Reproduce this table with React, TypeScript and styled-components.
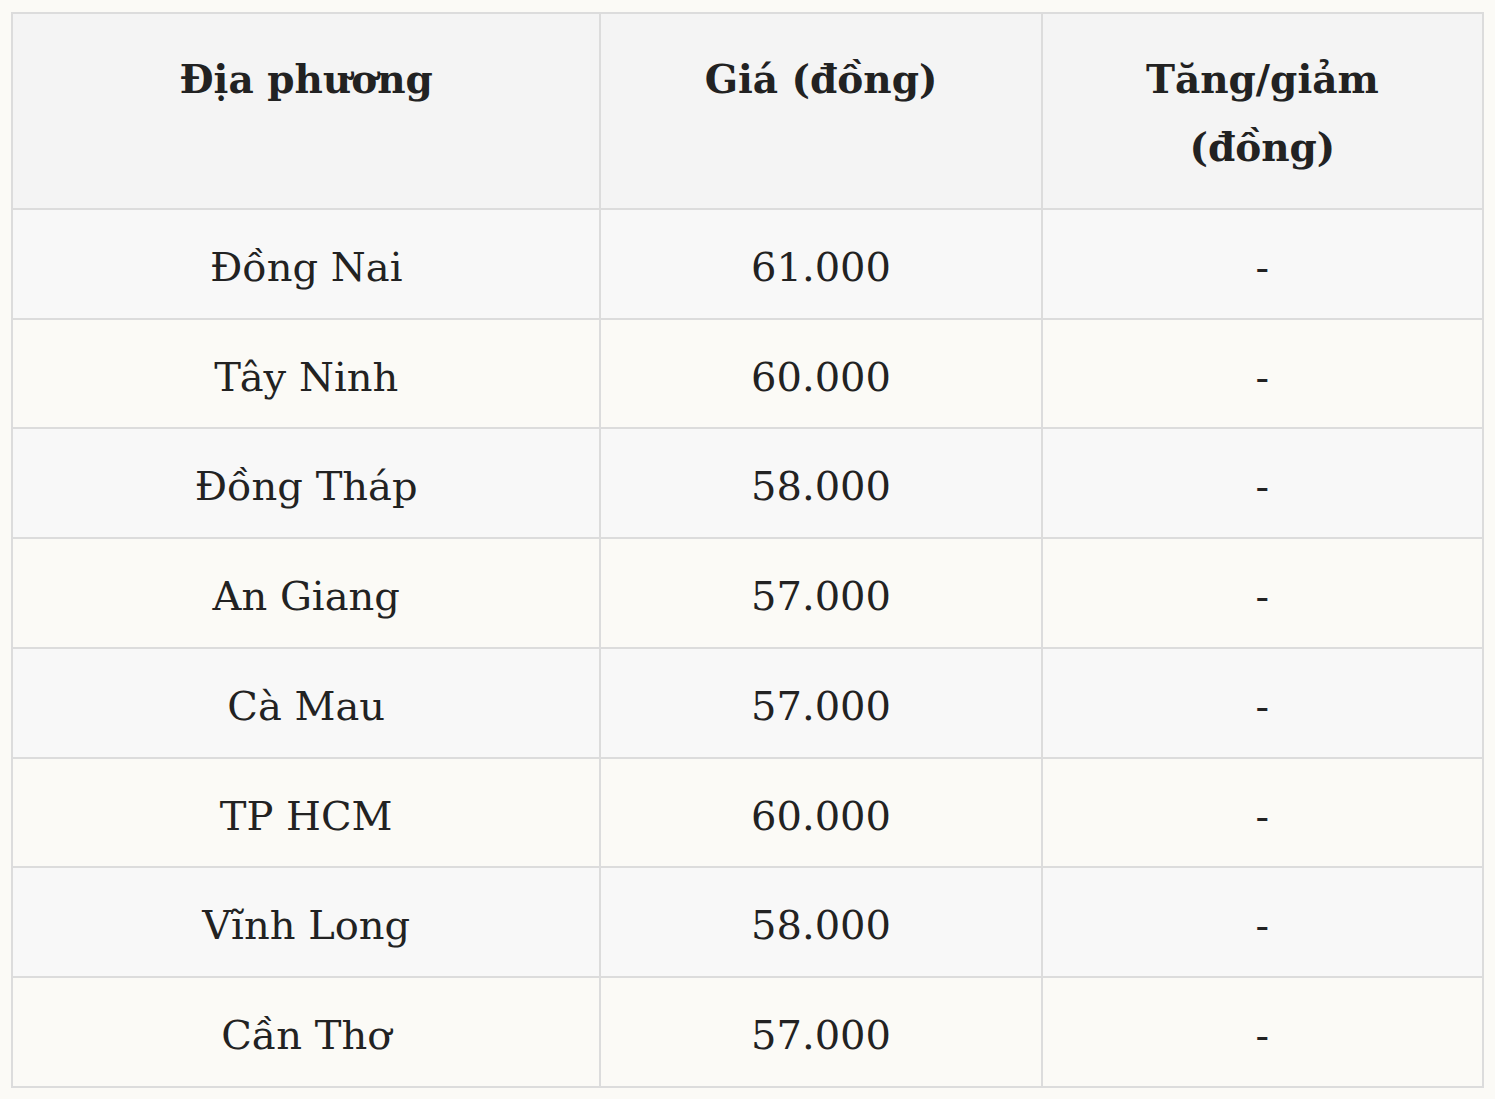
import React from 'react';
import styled, { createGlobalStyle } from 'styled-components';

const GlobalStyle = createGlobalStyle`
  html, body {
    margin: 0;
    padding: 0;
    background: #fbfaf6;
  }
  body {
    padding: 12px 11px;
    font-family: "DejaVu Serif", "Liberation Serif", serif;
    color: #222222;
  }
`;

const rows = [
  { place: 'Đồng Nai', price: '61.000', change: '-' },
  { place: 'Tây Ninh', price: '60.000', change: '-' },
  { place: 'Đồng Tháp', price: '58.000', change: '-' },
  { place: 'An Giang', price: '57.000', change: '-' },
  { place: 'Cà Mau', price: '57.000', change: '-' },
  { place: 'TP HCM', price: '60.000', change: '-' },
  { place: 'Vĩnh Long', price: '58.000', change: '-' },
  { place: 'Cần Thơ', price: '57.000', change: '-' },
];

const App = () => {
  return (
    <>
      <GlobalStyle />
      <PriceTable>
        <colgroup>
          <col style={{ width: '40%' }} />
          <col style={{ width: '30%' }} />
          <col style={{ width: '30%' }} />
        </colgroup>
        <thead>
          <tr>
            <HeadCell>Địa phương</HeadCell>
            <HeadCell>Giá (đồng)</HeadCell>
            <HeadCell>Tăng/giảm (đồng)</HeadCell>
          </tr>
        </thead>
        <tbody>
          {rows.map((row, i) => (
            <BodyRow key={row.place} $odd={i % 2 === 0}>
              <BodyCell>{row.place}</BodyCell>
              <BodyCell>{row.price}</BodyCell>
              <BodyCell>{row.change}</BodyCell>
            </BodyRow>
          ))}
        </tbody>
      </PriceTable>
    </>
  );
};

export default App;

const PriceTable = styled.table`
  width: 1473px;
  border-collapse: collapse;
  table-layout: fixed;
  border: 2px solid #dcdcdc;
`;

const HeadCell = styled.th`
  background-color: #f4f4f4;
  border: 2px solid #dcdcdc;
  padding: 31px 60px 27px;
  vertical-align: top;
  text-align: center;
  font-size: 39px;
  font-weight: 700;
  line-height: 68px;
  color: #222222;
`;

const BodyRow = styled.tr<{ $odd: boolean }>`
  background-color: ${({ $odd }) => ($odd ? '#f8f8f8' : '#fbfaf6')};
`;

const BodyCell = styled.td`
  border: 2px solid #dcdcdc;
  padding: 24px 16px 16px;
  text-align: center;
  font-size: 40px;
  line-height: 67.7px;
  color: #222222;
`;
